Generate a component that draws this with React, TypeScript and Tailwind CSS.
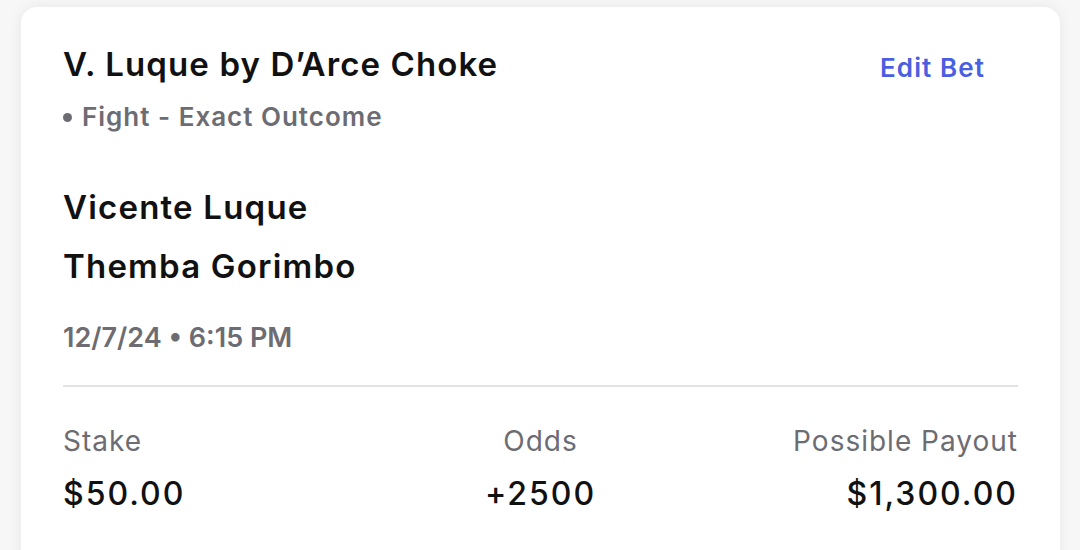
import React from "react";

export default function App() {
  const font = { fontFamily: "Inter, 'Noto Sans', sans-serif" };
  return (
    <div className="w-[1080px] h-[550px] overflow-hidden bg-[#f7f7f7]" style={font}>
      <div className="ml-[21px] mt-[7px] w-[1039px] h-[600px] bg-white rounded-[16px] shadow-[0_0_14px_rgba(0,0,0,0.07)] px-[42px] pt-[37px]">
        <div className="flex justify-between items-start">
          <div>
            <div className="text-[33px] leading-[40px] font-semibold tracking-[1.1px] text-[#111]">V. Luque by D’Arce Choke</div>
            <div className="mt-[17px] text-[26px] leading-[32px] font-semibold tracking-[1px] text-[#6c6c72] flex items-center">
              <span className="inline-block w-[9px] h-[9px] rounded-full bg-[#6c6c72] mr-[10px]" />
              Fight - Exact Outcome
            </div>
          </div>
          <div className="mt-[8px] mr-[33px] text-[26px] leading-[32px] font-semibold tracking-[1.1px] text-[#4a5ee2]">Edit Bet</div>
        </div>
        <div className="mt-[54px] text-[33px] leading-[40px] font-semibold tracking-[1.2px] text-[#111]">Vicente Luque</div>
        <div className="mt-[19px] text-[33px] leading-[40px] font-semibold tracking-[1.2px] text-[#111]">Themba Gorimbo</div>
        <div className="mt-[35px] text-[27px] leading-[34px] font-semibold text-[#6c6c72]">12/7/24 • 6:15 PM</div>
        <div className="mt-[30px] h-[2px] bg-[#e2e2e5]" />
        <div className="mt-[37px] grid grid-cols-3">
          <div className="text-left">
            <div className="text-[28px] leading-[34px] tracking-[1px] text-[#6c6c72]">Stake</div>
            <div className="mt-[17px] text-[32px] leading-[38px] font-medium tracking-[2px] text-[#111]">$50.00</div>
          </div>
          <div className="text-center">
            <div className="text-[28px] leading-[34px] tracking-[1px] text-[#6c6c72]">Odds</div>
            <div className="mt-[17px] text-[32px] leading-[38px] font-medium tracking-[2px] text-[#111]">+2500</div>
          </div>
          <div className="text-right">
            <div className="text-[28px] leading-[34px] tracking-[1px] text-[#6c6c72]">Possible Payout</div>
            <div className="mt-[17px] text-[32px] leading-[38px] font-medium tracking-[2px] text-[#111]">$1,300.00</div>
          </div>
        </div>
      </div>
    </div>
  );
}
